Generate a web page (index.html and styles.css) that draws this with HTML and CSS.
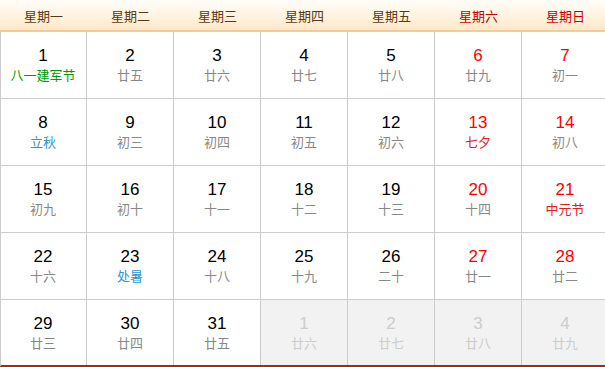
FILE: index.html
```html
<!DOCTYPE html>
<html lang="zh">
<head>
<meta charset="utf-8">
<link rel="stylesheet" href="styles.css">
</head>
<body>
<div class="cal">
  <div class="head">
    <div class="wd">星期一</div>
    <div class="wd">星期二</div>
    <div class="wd">星期三</div>
    <div class="wd">星期四</div>
    <div class="wd">星期五</div>
    <div class="wd we">星期六</div>
    <div class="wd we">星期日</div>
  </div>
  <div class="grid">
    <div class="cell"><span class="n">1</span><span class="l fest">八一建军节</span></div>
    <div class="cell"><span class="n">2</span><span class="l">廿五</span></div>
    <div class="cell"><span class="n">3</span><span class="l">廿六</span></div>
    <div class="cell"><span class="n">4</span><span class="l">廿七</span></div>
    <div class="cell"><span class="n">5</span><span class="l">廿八</span></div>
    <div class="cell we"><span class="n">6</span><span class="l">廿九</span></div>
    <div class="cell we"><span class="n">7</span><span class="l">初一</span></div>

    <div class="cell"><span class="n">8</span><span class="l term">立秋</span></div>
    <div class="cell"><span class="n">9</span><span class="l">初三</span></div>
    <div class="cell"><span class="n">10</span><span class="l">初四</span></div>
    <div class="cell"><span class="n">11</span><span class="l">初五</span></div>
    <div class="cell"><span class="n">12</span><span class="l">初六</span></div>
    <div class="cell we"><span class="n">13</span><span class="l red">七夕</span></div>
    <div class="cell we"><span class="n">14</span><span class="l">初八</span></div>

    <div class="cell"><span class="n">15</span><span class="l">初九</span></div>
    <div class="cell"><span class="n">16</span><span class="l">初十</span></div>
    <div class="cell"><span class="n">17</span><span class="l">十一</span></div>
    <div class="cell"><span class="n">18</span><span class="l">十二</span></div>
    <div class="cell"><span class="n">19</span><span class="l">十三</span></div>
    <div class="cell we"><span class="n">20</span><span class="l">十四</span></div>
    <div class="cell we"><span class="n">21</span><span class="l red">中元节</span></div>

    <div class="cell"><span class="n">22</span><span class="l">十六</span></div>
    <div class="cell"><span class="n">23</span><span class="l term">处暑</span></div>
    <div class="cell"><span class="n">24</span><span class="l">十八</span></div>
    <div class="cell"><span class="n">25</span><span class="l">十九</span></div>
    <div class="cell"><span class="n">26</span><span class="l">二十</span></div>
    <div class="cell we"><span class="n">27</span><span class="l">廿一</span></div>
    <div class="cell we"><span class="n">28</span><span class="l">廿二</span></div>

    <div class="cell last"><span class="n">29</span><span class="l">廿三</span></div>
    <div class="cell last"><span class="n">30</span><span class="l">廿四</span></div>
    <div class="cell last"><span class="n">31</span><span class="l">廿五</span></div>
    <div class="cell last other"><span class="n">1</span><span class="l">廿六</span></div>
    <div class="cell last other"><span class="n">2</span><span class="l">廿七</span></div>
    <div class="cell last other"><span class="n">3</span><span class="l">廿八</span></div>
    <div class="cell last other"><span class="n">4</span><span class="l">廿九</span></div>
  </div>
</div>
</body>
</html>
```

FILE: styles.css
```css
html, body {
  margin: 0;
  padding: 0;
  background: #fff;
  overflow: hidden;
}
.cal {
  width: 610px;
  font-family: "Liberation Sans", Arial, "Noto Sans CJK SC", sans-serif;
}
.head {
  display: grid;
  grid-template-columns: 87px repeat(6, 87px);
  height: 30px;
  background: linear-gradient(to bottom, #fffdf9 0%, #fff4e2 50%, #fde8c6 100%);
  border-bottom: 2px solid #f2caa0;
}
.wd {
  display: flex;
  align-items: center;
  justify-content: center;
  font-family: "Noto Sans CJK SC", sans-serif;
  font-size: 13px;
  color: #5a3a12;
}
.wd.we {
  color: #c80000;
}
.grid {
  display: grid;
  grid-template-columns: 86px repeat(6, 87px);
  border-left: 1px solid #cccccc;
  border-bottom: 2px solid #b3230f;
}
.cell {
  box-sizing: border-box;
  height: 67px;
  border-right: 1px solid #cccccc;
  border-bottom: 1px solid #cccccc;
  display: flex;
  flex-direction: column;
  align-items: center;
  padding-top: 14px;
}
.grid .cell:nth-child(7n+1) {
  margin-left: -1px;
  width: 87px;
}
.cell.last {
  height: 65px;
  border-bottom: none;
}
.n {
  font-size: 17px;
  line-height: 20px;
  color: #000;
}
.l {
  font-family: "Noto Sans CJK SC", sans-serif;
  font-size: 13px;
  line-height: 17px;
  color: #888;
}
.we .n {
  color: #ff0000;
}
.l.fest {
  color: #009900;
}
.l.term {
  color: #2e96cf;
}
.l.red {
  color: #e02020;
}
.other {
  background: #f2f2f2;
}
.other .n, .other .l {
  color: #cccccc;
}
```
